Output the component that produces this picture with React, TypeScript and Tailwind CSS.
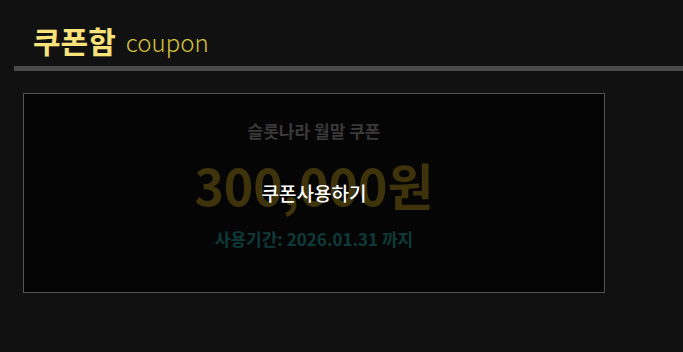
const font = "font-['Noto_Sans_CJK_KR','Noto_Sans',sans-serif]"

export default function App() {
  return (
    <div className={`min-h-[352px] w-full bg-[#121112] ${font}`}>
      <div className="flex items-end gap-[10px] pl-[33px] pt-[20px] pb-[6px]">
        <h1 className="text-[30px] font-bold leading-[40px] text-[#f8e27a]">쿠폰함</h1>
        <span className="text-[24px] font-light leading-[36px] text-[#d8c43e]">coupon</span>
      </div>
      <div className="ml-[14px] h-[5px] bg-[#4b4a4b]" />

      <div className="pl-[23px] pt-[22px]">
        <div className="relative flex h-[200px] w-[582px] flex-col items-center border border-[#555455] bg-[#060506] pt-[25px]">
          <p className="text-[17px] font-bold leading-[24px] text-[#3a393a]">슬롯나라 월말 쿠폰</p>
          <p className="mt-[9px] text-[50px] font-bold leading-[64px] text-[#3e330a]">300,000원</p>
          <p className="mt-[11px] text-[17px] font-semibold leading-[24px] text-[#0e3b39]">사용기간: 2026.01.31 까지</p>
          <button className="absolute inset-0 flex items-center justify-center text-[19px] font-medium text-white">
            쿠폰사용하기
          </button>
        </div>
      </div>
    </div>
  )
}
